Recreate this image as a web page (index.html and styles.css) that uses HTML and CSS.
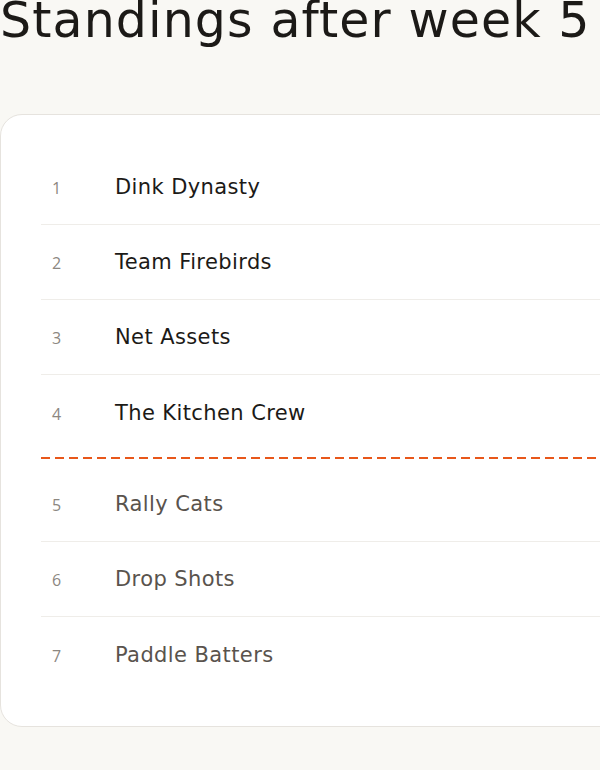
FILE: index.html
```html
<!DOCTYPE html>
<html lang="en">
<head>
<meta charset="utf-8">
<title>Standings</title>
<link rel="stylesheet" href="styles.css">
</head>
<body>
<main class="page">
  <h1 class="title">Standings after week 5</h1>
  <section class="card">
    <ol class="table">
      <li class="row"><span class="rank">1</span><span class="team">Dink Dynasty</span></li>
      <li class="row"><span class="rank">2</span><span class="team">Team Firebirds</span></li>
      <li class="row"><span class="rank">3</span><span class="team">Net Assets</span></li>
      <li class="row row-last"><span class="rank">4</span><span class="team">The Kitchen Crew</span></li>
      <li class="cutoff" aria-hidden="true"></li>
      <li class="row out"><span class="rank">5</span><span class="team">Rally Cats</span></li>
      <li class="row out"><span class="rank">6</span><span class="team">Drop Shots</span></li>
      <li class="row out row-last"><span class="rank">7</span><span class="team">Paddle Batters</span></li>
    </ol>
  </section>
</main>
</body>
</html>
```
FILE: styles.css
```css
html, body {
  margin: 0;
  padding: 0;
  overflow: hidden;
}
body {
  background: #f9f8f4;
  font-family: "DejaVu Sans", "Open Sans", sans-serif;
  color: #1c1a17;
}
.page {
  width: 660px;
}
.title {
  width: fit-content;
  margin: 0;
  font-size: 49px;
  line-height: 42px;
  font-weight: 400;
  letter-spacing: 1.1px;
  color: #1c1a17;
  white-space: nowrap;
}
.card {
  margin-top: 72px;
  background: #ffffff;
  border: 1px solid #e6e3de;
  border-radius: 22px;
  padding: 35px 0 34px 40px;
}
.table {
  list-style: none;
  margin: 0;
  padding: 0;
}
.row {
  display: flex;
  align-items: center;
  height: 75px;
  border-bottom: 1px solid #efede9;
  box-sizing: border-box;
}
.row-last {
  border-bottom: none;
}
.rank {
  width: 74px;
  box-sizing: border-box;
  padding-left: 11px;
  padding-top: 2px;
  font-family: "Open Sans", sans-serif;
  font-size: 16px;
  line-height: 20px;
  font-variant-numeric: tabular-nums;
  color: #8c8781;
}
.team {
  font-size: 21px;
  line-height: 24px;
  font-weight: 400;
  letter-spacing: 0.4px;
  color: #1c1a17;
}
.out .team {
  color: #59534d;
}
.cutoff {
  height: 2px;
  margin: 7px 0 8px 0;
  background: linear-gradient(to right, #e8571a 0 9px, transparent 9px 14px) 0 0 / 14px 2px repeat-x;
}
```
